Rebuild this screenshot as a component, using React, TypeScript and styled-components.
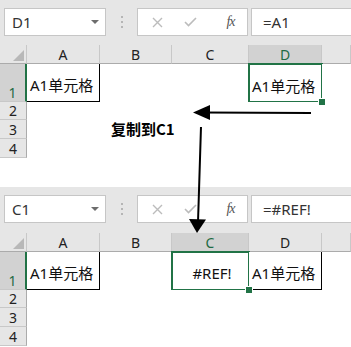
import React from 'react';
import styled, { createGlobalStyle } from 'styled-components';

const Global = createGlobalStyle`
  html, body { margin: 0; padding: 0; background: #fff; }
  body { font-family: "Noto Sans", "Noto Sans CJK SC", sans-serif; }
  * { box-sizing: border-box; }
`;

const Page = styled.div`
  position: relative;
  width: 351px;
  height: 347px;
  overflow: hidden;
  display: flex;
  flex-direction: column;
`;

const Sheet = styled.section<{ $gap: number }>`
  display: flex;
  flex-direction: column;
  margin-top: ${p => p.$gap}px;
`;

const FormulaBar = styled.div<{ $h: number }>`
  height: ${p => p.$h}px;
  background: #e6e6e6;
  display: flex;
  align-items: flex-start;
  padding: 8px 0 0 4px;
`;

const NameBox = styled.div`
  width: 102px;
  height: 28px;
  background: #fff;
  border: 1px solid #c6c6c6;
  display: flex;
  align-items: center;
  justify-content: space-between;
  padding: 0 6px 0 7px;
  font-size: 15px;
  color: #333;
`;

const DropArrow = styled.span`
  width: 0;
  height: 0;
  border-left: 4px solid transparent;
  border-right: 4px solid transparent;
  border-top: 4px solid #6d6d6d;
`;

const Grip = styled.div`
  width: 31px;
  height: 28px;
  display: flex;
  flex-direction: column;
  align-items: center;
  justify-content: center;
  gap: 3px;
`;

const Dot = styled.span`
  width: 2px;
  height: 2px;
  background: #b5b5b5;
`;

const ActionBox = styled.div`
  width: 111px;
  height: 28px;
  background: #fff;
  border: 1px solid #c6c6c6;
  display: flex;
  align-items: center;
  padding-left: 13px;
  gap: 0;
`;

const ActionSlot = styled.span<{ $w: number }>`
  width: ${p => p.$w}px;
  display: flex;
  align-items: center;
  justify-content: center;
`;

const Fx = styled.span`
  font-family: "Liberation Serif", "DejaVu Serif", serif;
  font-style: italic;
  font-size: 14px;
  color: #555;
  letter-spacing: -1px;
`;

const FormulaBox = styled.div`
  flex: 1;
  margin-left: 3px;
  margin-right: -2px;
  height: 28px;
  background: #fff;
  border: 1px solid #c6c6c6;
  display: flex;
  align-items: center;
  padding-left: 11px;
  font-size: 15px;
  color: #333;
`;

const Grid = styled.div`
  display: grid;
  grid-template-columns: 27px 73px 72px 77px 73px 1fr;
  grid-template-rows: 19px 38px 18px 19px 19px;
`;

const Corner = styled.div`
  background: #e6e6e6;
  border-right: 1px solid #c8c8c8;
  border-bottom: 1px solid #ababab;
  position: relative;
  overflow: hidden;
  &::after {
    content: '';
    position: absolute;
    right: 2px;
    bottom: 2px;
    width: 0;
    height: 0;
    border-left: 11px solid transparent;
    border-bottom: 11px solid #b8b8b8;
  }
`;

const ColHead = styled.div<{ $sel?: boolean }>`
  background: ${p => (p.$sel ? '#d2d2d2' : '#e6e6e6')};
  border-right: 1px solid #c8c8c8;
  border-bottom: 1px solid #ababab;
  display: flex;
  align-items: center;
  justify-content: center;
  font-size: 14px;
  color: ${p => (p.$sel ? '#1e6b43' : '#222')};
`;

const RowHead = styled.div<{ $sel?: boolean }>`
  background: ${p => (p.$sel ? '#d2d2d2' : '#e6e6e6')};
  border-bottom: 1px solid #c8c8c8;
  border-right: ${p => (p.$sel ? '2px solid #217346' : '1px solid #ababab')};
  display: flex;
  align-items: flex-end;
  justify-content: center;
  font-size: 14px;
  line-height: 17px;
  padding-bottom: 0;
  color: ${p => (p.$sel ? '#1e6b43' : '#222')};
`;

const Cell = styled.div<{ $boxed?: boolean; $sel?: boolean; $center?: boolean }>`
  position: relative;
  background: #fff;
  display: flex;
  align-items: center;
  justify-content: ${p => (p.$center ? 'center' : 'flex-start')};
  padding: 4px 0 0 3px;
  font-size: 15px;
  color: #111;
  white-space: nowrap;
  border-right: ${p => (p.$boxed ? '1px solid #000' : 'none')};
  border-bottom: ${p => (p.$boxed ? '1px solid #000' : 'none')};
  ${p =>
    p.$sel &&
    `
    &::after {
      content: '';
      position: absolute;
      left: -1px;
      top: -1px;
      right: -1px;
      bottom: -1px;
      border: 2px solid #217346;
      pointer-events: none;
    }
    &::before {
      content: '';
      position: absolute;
      right: -4px;
      bottom: -4px;
      width: 6px;
      height: 6px;
      background: #217346;
      border: 1px solid #fff;
      z-index: 2;
    }
  `}
`;

const Label = styled.div`
  position: absolute;
  left: 111px;
  top: 118px;
  font-family: "Noto Sans CJK SC", "Noto Sans", sans-serif;
  font-weight: 700;
  font-size: 15px;
  color: #000;
`;

const Overlay = styled.svg`
  position: absolute;
  left: 0;
  top: 0;
  pointer-events: none;
`;

type SheetProps = {
  gap: number;
  barH: number;
  name: string;
  formula: string;
  selCol: number;
  cells: { text?: string; boxed?: boolean; sel?: boolean; center?: boolean }[];
};

const cols = ['A', 'B', 'C', 'D', ''];

function Workbook({ gap, barH, name, formula, selCol, cells }: SheetProps) {
  return (
    <Sheet $gap={gap}>
      <FormulaBar $h={barH}>
        <NameBox>
          <span>{name}</span>
          <DropArrow />
        </NameBox>
        <Grip>
          <Dot />
          <Dot />
          <Dot />
        </Grip>
        <ActionBox>
          <ActionSlot $w={12}>
            <svg width="11" height="11" viewBox="0 0 11 11">
              <path d="M1 1L10 10M10 1L1 10" stroke="#bcbcbc" strokeWidth="1.4" />
            </svg>
          </ActionSlot>
          <ActionSlot $w={55}>
            <svg width="13" height="10" viewBox="0 0 13 10">
              <path d="M1 5L4.5 8.5L12 1" stroke="#bcbcbc" strokeWidth="1.6" fill="none" />
            </svg>
          </ActionSlot>
          <ActionSlot $w={25}>
            <Fx>fx</Fx>
          </ActionSlot>
        </ActionBox>
        <FormulaBox>{formula}</FormulaBox>
      </FormulaBar>
      <Grid>
        <Corner />
        {cols.map((c, i) => (
          <ColHead key={i} $sel={i === selCol}>
            {c}
          </ColHead>
        ))}
        <RowHead $sel>1</RowHead>
        {cells.map((c, i) => (
          <Cell key={i} $boxed={c.boxed} $sel={c.sel} $center={c.center}>
            {c.text}
          </Cell>
        ))}
        {[2, 3, 4].map(r => (
          <React.Fragment key={r}>
            <RowHead>{r}</RowHead>
            {cols.map((_, i) => (
              <Cell key={i} />
            ))}
          </React.Fragment>
        ))}
      </Grid>
    </Sheet>
  );
}

export default function App() {
  return (
    <Page>
      <Global />
      <Workbook
        gap={0}
        barH={45}
        name="D1"
        formula="=A1"
        selCol={3}
        cells={[
          { text: 'A1单元格', boxed: true },
          {},
          {},
          { text: 'A1单元格', sel: true },
          {},
        ]}
      />
      <Workbook
        gap={29}
        barH={46}
        name="C1"
        formula="=#REF!"
        selCol={2}
        cells={[
          { text: 'A1单元格', boxed: true },
          {},
          { text: '#REF!', sel: true, center: true },
          { text: 'A1单元格', boxed: true },
          {},
        ]}
      />
      <Label>复制到C1</Label>
      <Overlay width="351" height="347" viewBox="0 0 351 347">
        <line x1="311" y1="113" x2="203" y2="112.5" stroke="#000" strokeWidth="2" />
        <polygon points="193,112.5 210,105 210,120" fill="#000" />
        <line x1="201" y1="127" x2="198" y2="222" stroke="#000" strokeWidth="2" />
        <polygon points="197,233 189,219 206,219.5" fill="#000" />
      </Overlay>
    </Page>
  );
}
